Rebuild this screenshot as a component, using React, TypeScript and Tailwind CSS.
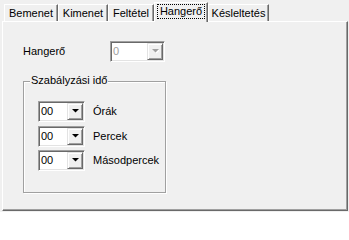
import React from 'react';

const tabs = [
  { label: 'Bemenet', w: 'w-[54px]' },
  { label: 'Kimenet', w: 'w-[50px]' },
  { label: 'Feltétel', w: 'w-[46px]' },
  { label: 'Hangerő', w: 'w-[54px]', active: true },
  { label: 'Késleltetés', w: 'w-[61px]' },
];

const Arrow = ({ disabled }: { disabled?: boolean }) => (
  <svg width="7" height="5" viewBox="0 0 7 5" className="block">
    {disabled && <path d="M1 1h7L4.5 4.5z" fill="#ffffff" />}
    <path d="M0 0h7L3.5 3.5z" fill={disabled ? '#a0a0a0' : '#000000'} />
  </svg>
);

const Combo = ({ value, width, disabled }: { value: string; width: string; disabled?: boolean }) => (
  <div
    className={`${width} h-[21px] flex p-[1px] bg-white border border-t-[#a0a0a0] border-l-[#a0a0a0] border-r-white border-b-white shadow-[inset_1px_1px_0_#696969,inset_-1px_-1px_0_#e3e3e3]`}
  >
    <div className={`flex-1 flex items-center pl-[1px] leading-[13px] ${disabled ? 'text-[#a0a0a0]' : 'text-black'}`}>
      {value}
    </div>
    <div className="w-[16px] h-[17px] flex items-center justify-center bg-[#f0f0f0] border border-t-[#e3e3e3] border-l-[#e3e3e3] border-r-[#696969] border-b-[#696969] shadow-[inset_1px_1px_0_#ffffff,inset_-1px_-1px_0_#a0a0a0]">
      <Arrow disabled={disabled} />
    </div>
  </div>
);

const TimeRow = ({ label }: { label: string }) => (
  <div className="flex items-center">
    <Combo value="00" width="w-[47px]" />
    <span className="ml-[8px] leading-[13px]">{label}</span>
  </div>
);

export default function App() {
  return (
    <div className="w-[349px] h-[212px] bg-[#f0f0f0] text-black text-[11px] font-['Liberation_Sans',Arial,sans-serif] overflow-hidden">
      {/* Tab strip */}
      <div className="h-[21px] flex items-end pl-[4px]">
        {tabs.map(tab =>
          tab.active ? (
            <div
              key={tab.label}
              className={`${tab.w} h-[20px] -mb-[1px] relative z-10 flex justify-center pt-[1px] bg-[#f0f0f0] border-l border-t border-r border-l-white border-t-white border-r-[#696969] shadow-[inset_-1px_0_0_#a0a0a0]`}
            >
              <span className="h-[15px] px-[2px] leading-[13px] border border-dotted border-black">{tab.label}</span>
            </div>
          ) : (
            <div
              key={tab.label}
              className={`${tab.w} h-[17px] flex justify-center pt-[2px] leading-[13px] border-l border-t border-r border-l-white border-t-white border-r-[#696969] shadow-[inset_-1px_0_0_#a0a0a0]`}
            >
              {tab.label}
            </div>
          )
        )}
      </div>

      {/* Page */}
      <div className="ml-[2px] w-[346px] h-[190px] pl-[20px] pt-[19px] border-l border-t border-r border-b border-l-white border-t-white border-r-[#696969] border-b-[#696969] shadow-[inset_-1px_-1px_0_#a0a0a0]">
        <div className="flex items-center">
          <span className="w-[87px] leading-[13px]">Hangerő</span>
          <Combo value="0" width="w-[55px]" disabled />
        </div>

        <div className="relative mt-[19px] w-[143px] h-[112px] pl-[14px] pt-[19px] border border-[#a0a0a0] shadow-[inset_1px_1px_0_#ffffff,1px_1px_0_#ffffff]">
          <span className="absolute -top-[8px] left-[6px] px-[1px] leading-[13px] bg-[#f0f0f0]">Szabályzási idő</span>
          <div className="flex flex-col gap-[3.5px]">
            <TimeRow label="Órák" />
            <TimeRow label="Percek" />
            <TimeRow label="Másodpercek" />
          </div>
        </div>
      </div>
    </div>
  );
}
